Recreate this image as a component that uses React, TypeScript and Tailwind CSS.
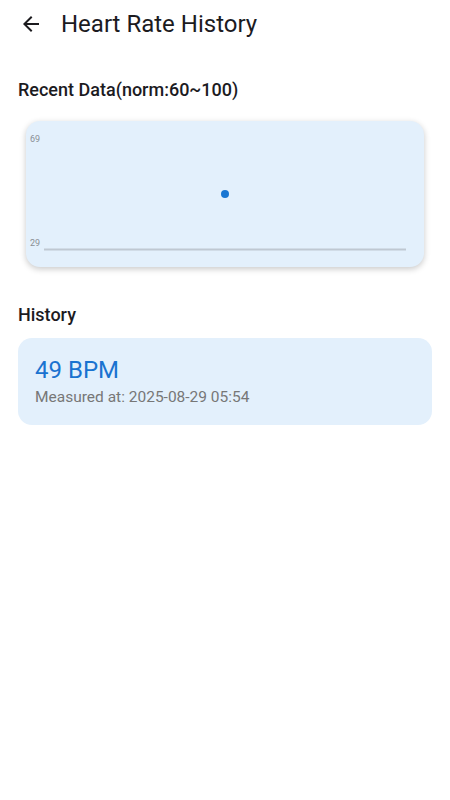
import React from "react";

const history = [{ bpm: 49, measuredAt: "2025-08-29 05:54" }];

function BackArrow() {
  return (
    <svg width="24" height="24" viewBox="0 0 24 24" fill="#1c1b1f">
      <path d="M20 11H7.83l5.59-5.59L12 4l-8 8 8 8 1.41-1.41L7.83 13H20v-2z" />
    </svg>
  );
}

function Chart() {
  return (
    <svg width="100%" height="146" viewBox="0 0 398 146" className="block">
      <text x="4" y="21" fontSize="9" fill="#8a8f95" fontFamily="Roboto, sans-serif">
        69
      </text>
      <text x="4" y="125" fontSize="9" fill="#8a8f95" fontFamily="Roboto, sans-serif">
        29
      </text>
      <line x1="18" y1="128.5" x2="380" y2="128.5" stroke="#bfc8d2" strokeWidth="2" />
      <circle cx="199" cy="73" r="4" fill="#1976d2" />
    </svg>
  );
}

export default function App() {
  return (
    <div className="min-h-[800px] w-[450px] bg-white font-['Roboto',sans-serif] text-[#1c1b1f]">
      {/* header */}
      <div className="flex h-12 items-center pl-[19px]">
        <BackArrow />
        <h1 className="ml-[18px] text-[24px] font-normal leading-7">Heart Rate History</h1>
      </div>

      <div className="px-[18px]">
        <h2 className="mt-[30px] text-[18px] font-medium leading-6">Recent Data(norm:60~100)</h2>

        <div className="mx-2 mt-[19px] h-[146px] rounded-[14px] bg-[#e3f0fc] shadow-[0_2px_6px_rgba(0,0,0,0.22)]">
          <Chart />
        </div>

        <h2 className="mt-9 text-[18px] font-medium leading-6">History</h2>

        <div className="mt-[11px] flex flex-col gap-3">
          {history.map((h, i) => (
            <div key={i} className="h-[87px] rounded-[14px] bg-[#e3f0fc] px-[17px] pt-[18px]">
              <div className="text-[24px] leading-7 text-[#1a73d0]">{h.bpm} BPM</div>
              <div className="mt-[3px] text-[15.5px] leading-5 text-[#777777]">
                Measured at: {h.measuredAt}
              </div>
            </div>
          ))}
        </div>
      </div>
    </div>
  );
}
